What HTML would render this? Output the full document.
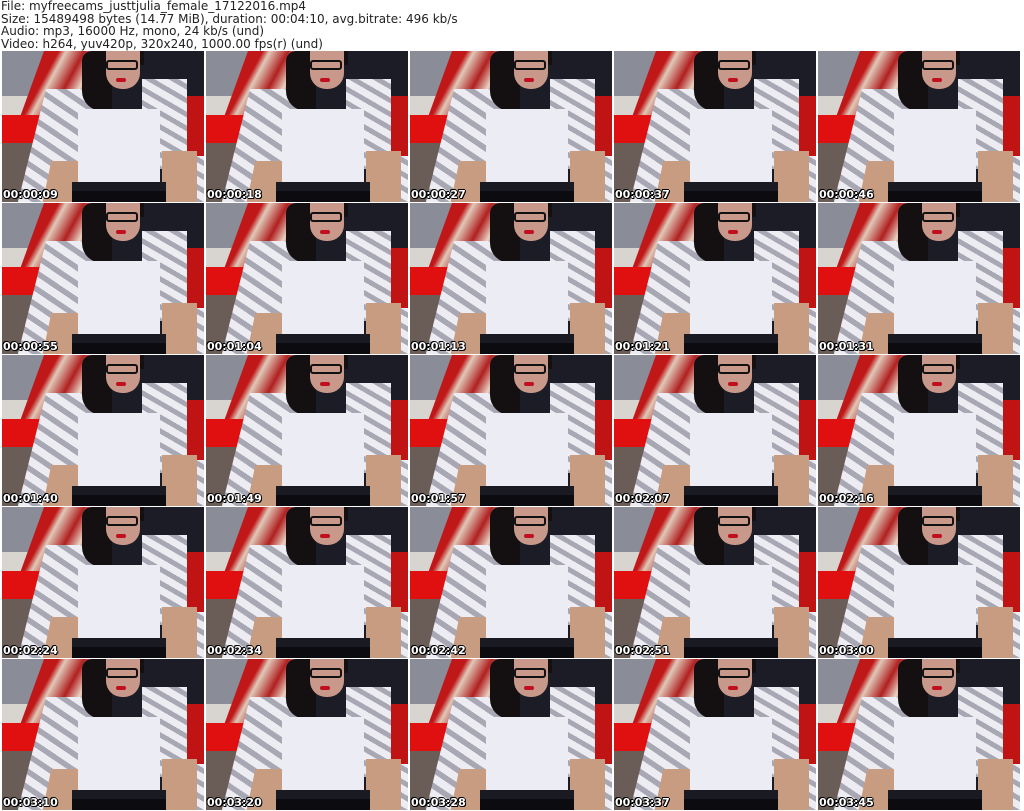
<html><head><style>
body{margin:0;width:1024px;height:811px;background:#fff;position:relative;overflow:hidden;font-family:"DejaVu Sans","Liberation Sans",sans-serif}
.h{position:absolute;left:1px;top:0;font-size:12px;line-height:12.5px;color:#222;white-space:pre}
.t{position:absolute;width:202px;height:151px;overflow:hidden;background:#1c1c26}
.t div{position:absolute}
.ts{position:absolute;left:1px;bottom:1px;font:bold 11px "DejaVu Sans",sans-serif;color:#fff;text-shadow:1px 0 #000,-1px 0 #000,0 1px #000,0 -1px #000,1px 1px #000,-1px -1px #000}
</style></head><body>
<div class="h">File: myfreecams_justtjulia_female_17122016.mp4
Size: 15489498 bytes (14.77 MiB), duration: 00:04:10, avg.bitrate: 496 kb/s
Audio: mp3, 16000 Hz, mono, 24 kb/s (und)
Video: h264, yuv420p, 320x240, 1000.00 fps(r) (und)</div>
<div id="g"></div>
<script>
var ts=["00:00:09","00:00:18","00:00:27","00:00:37","00:00:46","00:00:55","00:01:04","00:01:13","00:01:21","00:01:31","00:01:40","00:01:49","00:01:57","00:02:07","00:02:16","00:02:24","00:02:34","00:02:42","00:02:51","00:03:00","00:03:10","00:03:20","00:03:28","00:03:37","00:03:45"];
var S='repeating-linear-gradient(30deg,#ececf2 0 7px,#a8a8b4 7px 12px)';
var h="";
for(var i=0;i<25;i++){var c=i%5,r=Math.floor(i/5);
h+='<div class="t" style="left:'+(2+c*204)+'px;top:'+(51+r*152)+'px">'+
'<div style="left:0;top:0;width:45px;height:60px;background:#8a8c98"></div>'+
'<div style="left:0;top:45px;width:30px;height:25px;background:#d8d4d0"></div>'+
'<div style="left:30px;top:0;width:62px;height:66px;background:linear-gradient(100deg,#c01818 0 20%,#e0c8b8 30%,#b02020 55%,#e8d0c0 75%,#c02020);transform:skewX(-20deg)"></div>'+
'<div style="left:0;top:64px;width:60px;height:32px;background:#e01010"></div>'+
'<div style="left:0;top:92px;width:40px;height:59px;background:#6a5c56"></div>'+
'<div style="left:178px;top:45px;width:24px;height:65px;background:#c01414"></div>'+
'<div style="left:30px;top:38px;width:55px;height:113px;background:'+S+';transform:skewX(-14deg)"></div>'+
'<div style="left:140px;top:28px;width:45px;height:90px;background:'+S+'"></div>'+
'<div style="left:178px;top:105px;width:24px;height:46px;background:'+S+'"></div>'+
'<div style="left:80px;top:0;width:30px;height:60px;background:#141012;border-radius:10px 0 0 20px"></div>'+
'<div style="left:100px;top:0;width:42px;height:14px;background:#141012"></div>'+
'<div style="left:104px;top:0;width:34px;height:38px;background:#c8988a;border-radius:0 0 16px 16px"></div>'+
'<div style="left:104px;top:9px;width:32px;height:10px;border:2px solid #111;box-sizing:border-box;border-radius:3px"></div>'+
'<div style="left:114px;top:27px;width:10px;height:4px;background:#c01020;border-radius:2px"></div>'+
'<div style="left:45px;top:110px;width:32px;height:41px;background:#c89c80;transform:skewX(-12deg)"></div>'+
'<div style="left:160px;top:100px;width:35px;height:51px;background:#c89c80"></div>'+
'<div style="left:76px;top:58px;width:82px;height:74px;background:#ececf4"></div>'+
'<div style="left:70px;top:131px;width:94px;height:9px;background:#1a1a22"></div>'+
'<div style="left:70px;top:140px;width:94px;height:11px;background:#0c0c10"></div>'+
'<div class="ts">'+ts[i]+'</div></div>';}
document.getElementById("g").innerHTML=h;
</script>
</body></html>
